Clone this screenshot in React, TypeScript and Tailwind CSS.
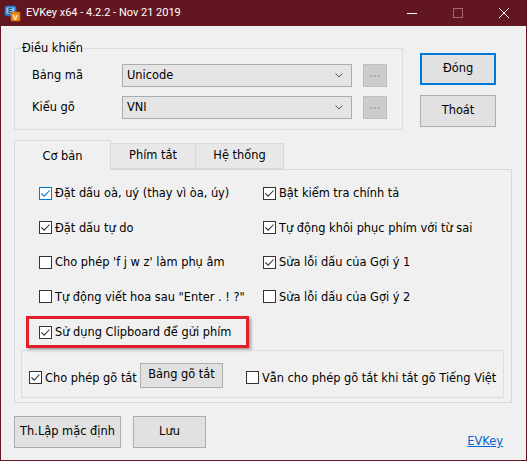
import React from "react";

const font = { fontFamily: "'DejaVu Sans', Verdana, sans-serif" };

function AppIcon() {
  return (
    <svg width="17" height="17" viewBox="0 0 17 17">
      <rect x="1" y="1" width="11" height="10" rx="1.5" fill="#2f7fd6" stroke="#1d5fa8" strokeWidth="0.8" />
      <rect x="2.5" y="2.5" width="8" height="6" fill="#8cc4f2" />
      <text x="4" y="8.2" fontSize="7" fontWeight="700" fill="#1b4f8f" fontFamily="Liberation Sans, sans-serif">E</text>
      <rect x="7" y="7" width="9" height="9" rx="1.2" fill="#f08a1c" stroke="#c2600a" strokeWidth="0.8" />
      <text x="9" y="14.5" fontSize="7" fontWeight="700" fill="#ffffff" fontFamily="Liberation Sans, sans-serif">V</text>
    </svg>
  );
}

function Box({ checked, focus }: { checked?: boolean; focus?: boolean }) {
  return (
    <span
      className={
        focus
          ? "flex h-[13px] w-[13px] shrink-0 items-center justify-center border border-[#0078d7] bg-white"
          : "flex h-[13px] w-[13px] shrink-0 items-center justify-center border border-[#333333] bg-white"
      }
    >
      {checked && (
        <svg width="11" height="11" viewBox="0 0 11 11">
          <path d="M1.5 5.5 L4.2 8.2 L9.5 2.5" fill="none" stroke={focus ? "#0078d7" : "#333333"} strokeWidth="1.1" />
        </svg>
      )}
    </span>
  );
}

function Check({ label, checked, focus }: { label: string; checked?: boolean; focus?: boolean }) {
  return (
    <div className="flex items-center gap-[3px] whitespace-nowrap">
      <Box checked={checked} focus={focus} />
      <span className="leading-[14px]">{label}</span>
    </div>
  );
}

function Combo({ value }: { value: string }) {
  return (
    <div className="flex h-[23px] w-[230px] items-center justify-between border border-[#acacac] bg-[#e5e5e5] pl-[4px] pr-[8px]">
      <span>{value}</span>
      <svg width="8" height="5" viewBox="0 0 8 5">
        <path d="M0.5 0.5 L4 4 L7.5 0.5" fill="none" stroke="#555" strokeWidth="1" />
      </svg>
    </div>
  );
}

function Dots() {
  return (
    <div className="ml-[11px] flex h-[23px] w-[24px] items-center justify-center border border-[#bfbfbf] bg-[#cccccc] pb-[4px] text-[#8a8a8a]">
      ...
    </div>
  );
}

export default function App() {
  return (
    <div className="flex h-[461px] w-[527px] flex-col bg-[#62161f] text-[11.4px] text-black" style={font}>
      {/* title bar */}
      <div className="flex h-[26px] shrink-0 items-center text-white">
        <div className="ml-[4px] flex h-[17px] w-[17px] items-center">
          <AppIcon />
        </div>
        <span className="ml-[5px] font-['Roboto',sans-serif] text-[11px]">EVKey x64 - 4.2.2 - Nov 21 2019</span>
        <div className="ml-auto flex h-full">
          <div className="flex w-[46px] items-center justify-center">
            <span className="block h-[1px] w-[10px] bg-white" />
          </div>
          <div className="flex w-[46px] items-center justify-center">
            <span className="block h-[10px] w-[10px] border border-[#a8646c]" />
          </div>
          <div className="flex w-[46px] items-center justify-center">
            <svg width="10" height="10" viewBox="0 0 10 10">
              <path d="M0 0 L10 10 M10 0 L0 10" stroke="#ffffff" strokeWidth="1" />
            </svg>
          </div>
        </div>
      </div>

      {/* body */}
      <div className="mx-[1px] mb-[1px] flex h-[434px] flex-col bg-[#f0f0f0] pl-[13px] pt-[22px]">
        <div className="flex items-start">
          <div className="flex h-[82px] w-[389px] flex-col border border-[#dcdcdc]">
            <span className="-mt-[8px] ml-[6px] w-fit bg-[#f0f0f0] px-[1px] leading-[15px]">Điều khiển</span>
            <div className="mt-[8px] flex items-center pl-[17px]">
              <span className="w-[90px]">Bảng mã</span>
              <Combo value="Unicode" />
              <Dots />
            </div>
            <div className="mt-[9px] flex items-center pl-[17px]">
              <span className="w-[90px]">Kiểu gõ</span>
              <Combo value="VNI" />
              <Dots />
            </div>
          </div>
          <div className="ml-[17px] mt-[5px] flex flex-col gap-[10px]">
            <div className="flex h-[32px] w-[76px] items-center justify-center border-2 border-[#0078d7] bg-[#e1e1e1]">Đóng</div>
            <div className="flex h-[32px] w-[76px] items-center justify-center border border-[#adadad] bg-[#e1e1e1]">Thoát</div>
          </div>
        </div>

        {/* tabs */}
        <div className="mt-[10px] flex items-end">
          <div className="relative z-10 -mb-[1px] flex h-[30px] w-[97px] items-start justify-center border border-b-0 border-[#d9d9d9] bg-[#f0f0f0] pt-[7px]">
            Cơ bản
          </div>
          <div className="flex h-[26px] w-[85px] items-center justify-center border-y border-r border-[#d9d9d9] bg-[#e8e8e8]">
            Phím tắt
          </div>
          <div className="flex h-[26px] w-[88px] items-center justify-center border-y border-r border-[#d9d9d9] bg-[#e8e8e8]">
            Hệ thống
          </div>
        </div>
        <div className="flex h-[234px] w-[498px] flex-col border border-[#d9d9d9] bg-[#f0f0f0] pt-[6px]">
          <div className="grid grid-cols-[224px_1fr] pl-[24px]">
            <div className="flex h-[34px] items-center"><Check label="Đặt dấu oà, uý (thay vì òa, úy)" checked focus /></div>
            <div className="flex h-[34px] items-center"><Check label="Bật kiểm tra chính tả" checked /></div>
            <div className="flex h-[35px] items-center"><Check label="Đặt dấu tự do" checked /></div>
            <div className="flex h-[35px] items-center"><Check label="Tự động khôi phục phím với từ sai" checked /></div>
            <div className="flex h-[34px] items-center"><Check label="Cho phép 'f j w z' làm phụ âm" /></div>
            <div className="flex h-[34px] items-center"><Check label="Sửa lỗi dấu của Gợi ý 1" checked /></div>
            <div className="flex h-[35px] items-center"><Check label={'Tự động viết hoa sau "Enter . ! ?"'} /></div>
            <div className="flex h-[35px] items-center"><Check label="Sửa lỗi dấu của Gợi ý 2" /></div>
          </div>
          <div className="ml-[11px] mt-[2px] flex h-[32px] w-[223px] items-center border-[3px] border-[#e3202a] pl-[10px] shadow-[2px_2px_3px_rgba(0,0,0,0.35)]">
            <Check label="Sử dụng Clipboard để gửi phím" checked />
          </div>
          <div className="ml-[6px] mt-[2px] flex h-[48px] w-[483px] items-center border border-[#dcdcdc] pl-[7px] pt-[7px]">
            <div className="w-[111px]">
              <Check label="Cho phép gõ tắt" checked />
            </div>
            <div className="-mt-[5px] flex h-[25px] w-[83px] items-center justify-center border border-[#adadad] bg-[#e1e1e1]">
              Bảng gõ tắt
            </div>
            <div className="ml-[23px]">
              <Check label="Vẫn cho phép gõ tắt khi tắt gõ Tiếng Việt" />
            </div>
          </div>
        </div>

        {/* bottom buttons */}
        <div className="mt-[13px] flex items-end pr-[23px]">
          <div className="flex h-[32px] w-[107px] items-center justify-center border border-[#adadad] bg-[#e1e1e1]">Th.Lập mặc định</div>
          <div className="ml-[12px] flex h-[32px] w-[73px] items-center justify-center border border-[#adadad] bg-[#e1e1e1]">Lưu</div>
          <a className="mb-[-1px] ml-auto leading-[15px] text-[#0066cc] underline" href="#">EVKey</a>
        </div>
      </div>
    </div>
  );
}
